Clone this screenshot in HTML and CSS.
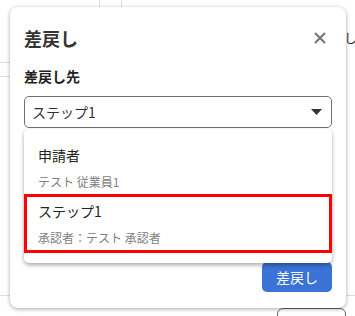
FILE: index.html
```html
<!DOCTYPE html>
<html lang="ja">
<head>
    <meta charset="UTF-8">
    <meta name="viewport" content="width=device-width, initial-scale=1.0">
    <title>差戻し</title>
    <link rel="stylesheet" href="styles.css">
</head>
<body>
    <div class="page">
        <div class="line-v line-v1"></div>
        <div class="line-v line-v2"></div>
        <div class="line-h line-h1"></div>
        <div class="line-h line-h2"></div>
        <div class="line-h line-h3"></div>
        <span class="page-action">差戻し</span>
        <div class="page-button"></div>
    </div>

    <div class="dialog">
        <div class="dialog-header">
            <h2>差戻し</h2>
            <button class="close-btn" type="button" aria-label="閉じる">
                <svg width="12" height="12" viewBox="0 0 12 12">
                    <path d="M1 1 L11 11 M11 1 L1 11" stroke="#757575" stroke-width="2" fill="none"/>
                </svg>
            </button>
        </div>

        <label class="field-label">差戻し先</label>
        <div class="select-wrap">
            <div class="select-box">
                <span>ステップ1</span>
                <svg class="caret" width="11" height="6" viewBox="0 0 11 6">
                    <path d="M0 0 H11 L5.5 6 Z" fill="#333"/>
                </svg>
            </div>
            <ul class="menu">
                <li class="menu-item">
                    <div class="item-main">申請者</div>
                    <div class="item-sub">テスト 従業員1</div>
                </li>
                <li class="menu-item selected">
                    <div class="item-main">ステップ1</div>
                    <div class="item-sub">承認者：テスト 承認者</div>
                </li>
            </ul>
        </div>

        <div class="dialog-footer">
            <button class="submit-btn" type="button">差戻し</button>
        </div>
    </div>
</body>
</html>
```

FILE: styles.css
```css
body {
    margin: 0;
    width: 355px;
    height: 316px;
    overflow: hidden;
    background: #fff;
    font-family: "Noto Sans CJK JP", "Noto Sans", sans-serif;
    color: #333;
}

/* page behind the dialog */
.page {
    position: relative;
    width: 355px;
    height: 316px;
    overflow: hidden;
}

.line-v {
    position: absolute;
    top: 0;
    width: 1px;
    height: 40px;
    background: #ddd;
}

.line-v1 { left: 99px; }
.line-v2 { left: 121px; }

.line-h {
    position: absolute;
    left: 0;
    height: 1px;
    background: #ddd;
}

.line-h1 { top: 62px; width: 40px; }
.line-h2 { top: 76px; width: 40px; }
.line-h3 { top: 295px; width: 355px; }

.page-action {
    position: absolute;
    left: 318px;
    top: 29px;
    font-size: 13px;
    line-height: 18px;
    color: #333;
    white-space: nowrap;
}

.page-button {
    position: absolute;
    left: 277px;
    top: 308px;
    width: 67px;
    height: 30px;
    border: 1px solid #666;
    border-radius: 6px;
}

/* dialog */
.dialog {
    position: absolute;
    left: 10px;
    top: 7px;
    width: 336px;
    box-sizing: border-box;
    padding: 18px 14px 16px;
    background: #fff;
    border-radius: 8px;
    box-shadow: 0 1px 4px rgba(0, 0, 0, 0.35);
    display: flex;
    flex-direction: column;
}

.dialog-header {
    display: flex;
    justify-content: space-between;
    align-items: center;
    height: 26px;
}

.dialog-header h2 {
    margin: 0;
    font-size: 18px;
    line-height: 26px;
    font-weight: bold;
    color: #333;
}

.close-btn {
    border: none;
    background: none;
    padding: 0;
    margin-right: 6px;
    width: 12px;
    height: 12px;
    display: flex;
}

.field-label {
    margin-top: 15px;
    font-size: 14px;
    line-height: 20px;
    font-weight: bold;
    color: #222;
}

.select-wrap {
    position: relative;
    margin-top: 10px;
}

.select-box {
    height: 32px;
    box-sizing: border-box;
    border: 1px solid #707070;
    border-radius: 5px;
    padding: 0 9px 0 7px;
    display: flex;
    align-items: center;
    justify-content: space-between;
    font-size: 14px;
    color: #333;
}

.menu {
    position: absolute;
    left: 0;
    right: 0;
    top: 100%;
    margin: 1px 0 0;
    padding: 12px 0 10px;
    list-style: none;
    background: #fff;
    border-radius: 5px;
    box-shadow: 0 2px 4px rgba(0, 0, 0, 0.35);
    z-index: 2;
}

.menu-item {
    padding: 4px 14px 3px;
}

.menu-item.selected {
    border: 3px solid #f00;
    padding: 4px 11px 3px;
}

.item-main {
    font-size: 14px;
    line-height: 20px;
    color: #222;
}

.item-sub {
    margin-top: 8px;
    font-size: 12px;
    line-height: 18px;
    color: #808080;
}

.dialog-footer {
    display: flex;
    justify-content: flex-end;
    margin-top: 134px;
}

.submit-btn {
    width: 70px;
    height: 30px;
    border: none;
    border-radius: 5px;
    background: #3a72d6;
    color: #fff;
    font-family: inherit;
    font-size: 14px;
}
```
